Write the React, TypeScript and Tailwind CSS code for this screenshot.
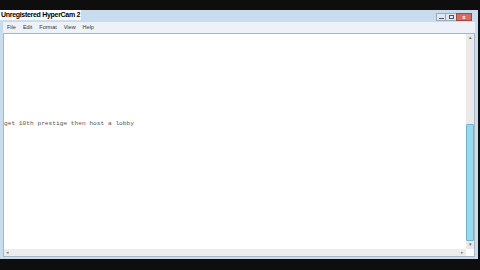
export default function App() {
  return (
    <div className="w-[480px] h-[270px] bg-[#0e0e0e] flex flex-col overflow-hidden" style={{ fontFamily: '"Liberation Sans", sans-serif' }}>
      <div className="h-[10px] shrink-0" />
      <div className="flex-1 flex flex-col bg-[#c9dcee] px-[3px] pb-[2px] mr-[2px]">
        {/* title bar */}
        <div className="h-[12px] flex items-center justify-between relative">
          <span className="absolute -left-[3px] top-0 bg-white text-black text-[7px] leading-[10px] font-bold px-[1px] tracking-[-0.3px]">Unregistered HyperCam 2</span>
          <span />
          <div className="flex h-[8px] mr-[3px] mt-[1px]">
            <div className="w-[10px] bg-[#dfe8f2] border border-[#9aabbe] flex items-end justify-center"><div className="w-[5px] h-[1px] bg-[#555] mb-[1px]" /></div>
            <div className="w-[10px] bg-[#dfe8f2] border-y border-[#9aabbe] flex items-center justify-center"><div className="w-[5px] h-[4px] border border-[#555]" /></div>
            <div className="w-[16px] bg-[#d86a66] border border-[#a04a46] flex items-center justify-center text-white text-[6px] leading-none font-bold">x</div>
          </div>
        </div>
        {/* menu bar */}
        <div className="h-[11px] bg-[#eef2f8] flex items-center gap-[7px] px-[4px] text-[5.5px] text-[#333]">
          <span>File</span>
          <span>Edit</span>
          <span>Format</span>
          <span>View</span>
          <span>Help</span>
        </div>
        {/* edit area */}
        <div className="flex-1 flex flex-col bg-white border border-[#a9b6c4]">
          <div className="flex-1 flex">
            <div className="flex-1 pt-[86px] pl-[0px]">
              <div className="text-[6.2px] leading-[8px] text-[#555]" style={{ fontFamily: '"Liberation Mono", monospace' }}>get 10th prestige then host a lobby</div>
            </div>
            <div className="w-[8px] bg-[#eaeaea] flex flex-col">
              <div className="h-[8px] text-[5px] text-[#666] flex items-center justify-center">▴</div>
              <div className="h-[82px]" />
              <div className="flex-1 bg-[#9ad9ec] border border-[#6cb4cf] rounded-[1px]" />
              <div className="h-[8px] text-[5px] text-[#666] flex items-center justify-center">▾</div>
            </div>
          </div>
          <div className="h-[7px] bg-[#ececec] flex items-center justify-between px-[2px] text-[5px] text-[#888] mr-[8px]">
            <span>◂</span>
            <span>▸</span>
          </div>
        </div>
      </div>
      <div className="h-[11px] shrink-0" />
    </div>
  );
}
